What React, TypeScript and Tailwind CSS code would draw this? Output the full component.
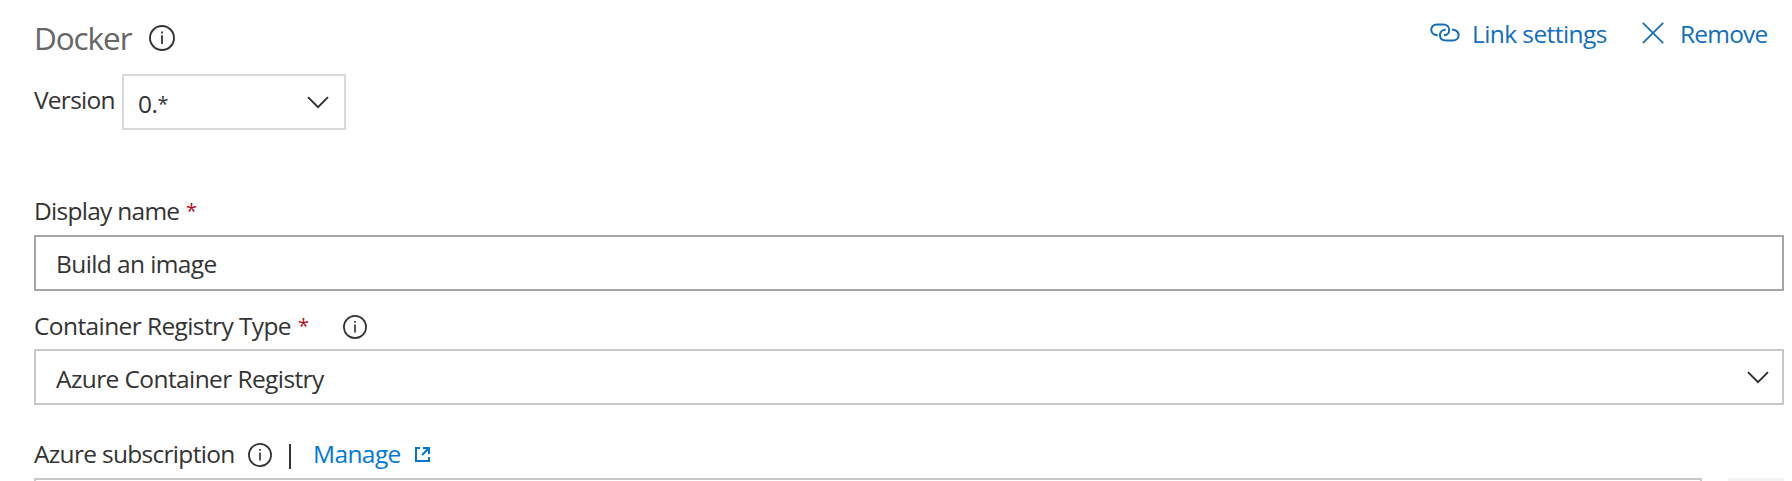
import React from "react";

function InfoIcon({ className }: { className: string }) {
  return (
    <svg viewBox="0 0 26 26" className={className} fill="none" stroke="#333" strokeWidth="1.9">
      <circle cx="13" cy="13" r="12" />
      <path d="M13 10.2v8.8M13 6.4v2.1" strokeWidth="1.8" />
    </svg>
  );
}

function Chevron() {
  return (
    <svg width="22" height="13" viewBox="0 0 22 13" fill="none" stroke="#2b2b2b" strokeWidth="1.8" className="shrink-0">
      <path d="M1 1.2 11 11.2 21 1.2" />
    </svg>
  );
}

const text = "whitespace-nowrap text-[24.5px] leading-[33px]";
const star = "text-[20px] leading-[33px]";

export default function App() {
  return (
    <div className="h-[481px] w-[1792px] overflow-hidden bg-white pl-[34px] font-['Open_Sans','Noto_Sans',sans-serif] text-[#333]">
      <header className="flex h-[74px] items-start justify-between pr-[25px]">
        <div className="flex items-start pt-[17px]">
          <h1 className="w-[115px] whitespace-nowrap text-[31.5px] leading-[42px] tracking-[-1.1px] text-[#666]">Docker</h1>
          <InfoIcon className="mt-2 h-[26px] w-[26px]" />
        </div>
        <div className="flex items-start pt-[17px] text-[#106ebe]">
          <button className="flex items-start">
            <svg width="30" height="20" viewBox="0 0 30 20" fill="none" stroke="currentColor" strokeWidth="2" className="mt-[6px] mr-[12px]">
              <path d="M7.6 12.4C3.6 12 1.2 9.5 1.2 6.8 1.2 3.8 3.5 1.4 7 1.4h6.2c3.5 0 6 2.3 6 5.5 0 3.1-2.2 5.4-5.2 5.4" />
              <path d="M22 6.4c4 .4 6.6 2.7 6.6 5.8 0 3.2-2.4 5.3-6 5.3h-6.4c-3.7 0-6.2-2-6.2-5.2 0-3.1 2.3-5.7 5.8-5.9" />
            </svg>
            <span className={text + " w-[170px] text-left tracking-[-0.58px]"}>Link settings</span>
          </button>
          <button className="flex items-start">
            <svg width="22" height="22" viewBox="0 0 22 22" fill="none" stroke="currentColor" strokeWidth="1.7" className="mt-[5px] mr-[16px]">
              <path d="M.8.8 21.2 21.2M21.2.8.8 21.2" />
            </svg>
            <span className={text + " w-[87px] text-left tracking-[-0.8px]"}>Remove</span>
          </button>
        </div>
      </header>

      <div className="flex h-[120px] items-start">
        <span className={text + " mt-[9px] w-[88px] tracking-[-0.75px]"}>Version</span>
        <div className="flex h-14 w-[224px] items-start justify-between border-2 border-[#d9d9d9] pt-[11px] pr-[15px] pl-[14px]">
          <span className="flex items-start">
            <span className={text + " tracking-[-0.5px]"}>0.</span>
            <span className={star}>*</span>
          </span>
          <span className="pt-[9px]"><Chevron /></span>
        </div>
      </div>

      <div className="flex h-[41px] items-start">
        <span className={text + " w-[152px] tracking-[-0.73px]"}>Display name</span>
        <span className={star + " text-[#b10e1e]"}>*</span>
      </div>
      <div className="flex h-14 w-[1750px] items-start border-2 border-[#a6a6a6] pt-[10px] pl-[20px]">
        <span className={text + " tracking-[-0.6px]"}>Build an image</span>
      </div>

      <div className="flex h-[58px] items-start pt-[18px]">
        <span className={text + " w-[264px] tracking-[-0.6px]"}>Container Registry Type</span>
        <span className={star + " w-[45px] text-[#b10e1e]"}>*</span>
        <InfoIcon className="mt-[6px] h-6 w-6" />
      </div>
      <div className="flex h-14 w-[1750px] items-start justify-between border-2 border-[#c8c8c8] pt-[11px] pr-[13px] pl-[20px]">
        <span className={text + " tracking-[-0.6px]"}>Azure Container Registry</span>
        <span className="pt-[9px]"><Chevron /></span>
      </div>

      <div className="flex h-[73px] items-start pt-[32px]">
        <span className={text + " w-[214px] tracking-[-0.7px]"}>Azure subscription</span>
        <InfoIcon className="mt-[6px] h-6 w-6" />
        <span className="mt-[7px] ml-[17px] h-[25px] w-[2px] bg-[#333]" />
        <a className="ml-[22px] flex items-start text-[#0078d4]">
          <span className={text + " w-[102px] tracking-[-0.6px]"}>Manage</span>
          <svg width="15" height="15" viewBox="0 0 15 15" fill="none" stroke="currentColor" strokeWidth="2" className="mt-[10px]">
            <path d="M5 1H1v13h13v-4M8 1h6v6M14 1 7 8" />
          </svg>
        </a>
      </div>
      <div className="flex h-[3px] justify-between overflow-hidden pr-2">
        <div className="h-14 w-[1668px] border-2 border-[#c8c8c8]" />
        <div className="h-14 w-14 bg-[#f3f3f3]" />
      </div>
    </div>
  );
}
